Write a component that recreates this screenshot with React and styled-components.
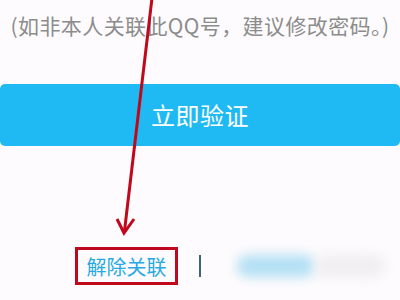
import React from "react";
import styled, { createGlobalStyle } from "styled-components";

const GlobalStyle = createGlobalStyle`
  html, body {
    margin: 0;
    padding: 0;
    background: #fdfbfd;
  }
  body {
    font-family: "Noto Sans CJK SC", "Noto Sans", sans-serif;
  }
`;

const Page = styled.div`
  position: relative;
  width: 400px;
  height: 300px;
  overflow: hidden;
  background: #fdfbfd;
`;

const Notice = styled.p`
  margin: 0;
  padding-top: 10px;
  height: 30px;
  line-height: 30px;
  text-align: center;
  font-size: 21px;
  color: #8c8c8c;
  white-space: nowrap;
  letter-spacing: 0.4px;
`;

const VerifyButton = styled.button`
  display: flex;
  align-items: center;
  justify-content: center;
  width: 400px;
  height: 62px;
  margin-top: 44px;
  border: none;
  border-radius: 5px;
  background: #1fbaf3;
  color: #ffffff;
  font-family: inherit;
  font-size: 24px;
  letter-spacing: 0.5px;
  padding: 0 0 2px;
`;

const Footer = styled.div`
  display: grid;
  grid-template-columns: 1fr auto 1fr;
  align-items: center;
  margin-top: 101px;
  height: 38px;
`;

const LinkBox = styled.div`
  justify-self: end;
  margin-right: 21px;
  box-sizing: border-box;
  width: 103px;
  height: 38px;
  border: 3px solid #c0081c;
  display: flex;
  align-items: center;
  justify-content: center;
  color: #27a9e3;
  font-size: 20px;
`;

const Divider = styled.span`
  width: 2px;
  height: 22px;
  background: #3f6378;
`;

const Blurred = styled.div`
  justify-self: start;
  margin-left: 36px;
  display: flex;
  align-items: center;
`;

const BlurChunk = styled.span`
  display: block;
  width: ${({ $w }) => $w}px;
  height: 22px;
  background: ${({ $color }) => $color};
  filter: blur(6px);
  border-radius: 10px;
`;

const Arrow = styled.svg`
  position: absolute;
  left: 0;
  top: 0;
  pointer-events: none;
`;

export default function App() {
  return (
    <>
      <GlobalStyle />
      <Page>
        <Notice>(如非本人关联此QQ号，建议修改密码。)</Notice>
        <VerifyButton>立即验证</VerifyButton>
        <Footer>
          <LinkBox>解除关联</LinkBox>
          <Divider />
          <Blurred>
            <BlurChunk $w={78} $color="#b3dff4" />
            <BlurChunk $w={70} $color="#f0eef0" />
          </Blurred>
        </Footer>
        <Arrow width="400" height="300" viewBox="0 0 400 300">
          <line x1="152" y1="-2" x2="124.5" y2="231" stroke="#c0081c" strokeWidth="3" />
          <polyline
            points="117,219 124,233 134,219"
            fill="none"
            stroke="#c0081c"
            strokeWidth="3"
            strokeLinejoin="miter"
          />
        </Arrow>
      </Page>
    </>
  );
}
